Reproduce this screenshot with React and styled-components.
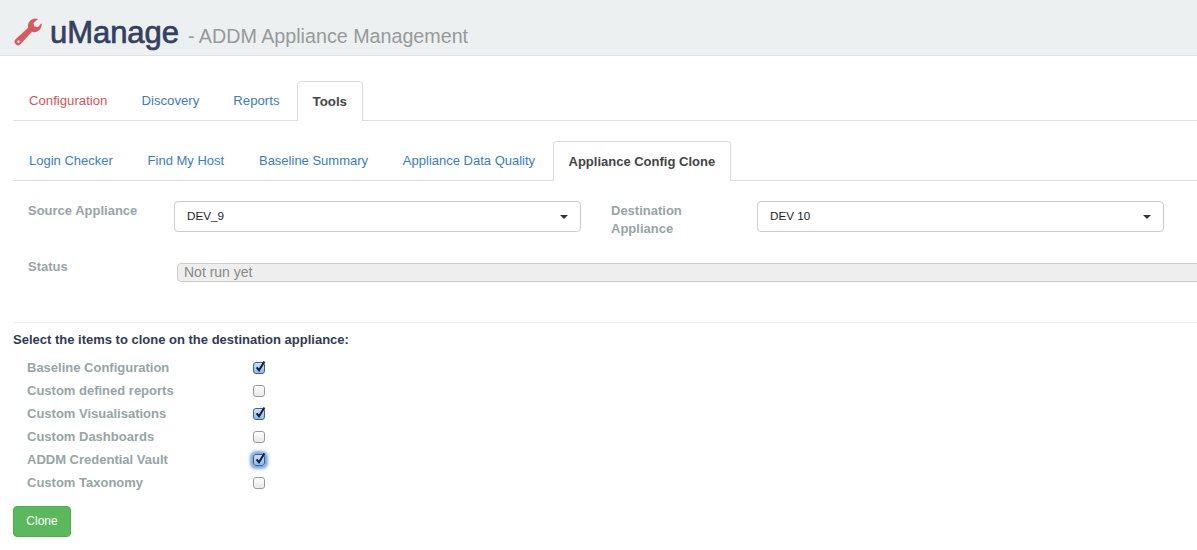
import React from "react";
import styled, { createGlobalStyle } from "styled-components";

const Global = createGlobalStyle`
  html, body { margin: 0; padding: 0; background: #fff; overflow: hidden; }
  body { font-family: "Liberation Sans", Arial, sans-serif; font-size: 13px; color: #333; }
`;
const Page = styled.div`width: 1197px; height: 550px; overflow: hidden;`;
const Header = styled.header`
  height: 56px; box-sizing: border-box; background: #ecf0f1; border-bottom: 1px solid #dde1e2;
  display: flex; align-items: flex-start; padding: 15px 0 0 14px;
`;
const Wrench = styled.svg`width: 29px; height: 32px; margin-right: 7px; flex: none;`;
const Brand = styled.span`font-size: 31px; line-height: 36px; font-weight: 400; color: #34405f; -webkit-text-stroke: 0.7px #34405f; letter-spacing: -0.05px;`;
const Sub = styled.span`font-size: 19.7px; line-height: 24px; color: #969a9b; margin: 9px 0 0 9px;`;
const Main = styled.main`padding: 0 0 0 13px;`;
const Tabs = styled.nav`
  display: flex; border-bottom: 1px solid #ddd; height: 39px;
  margin-top: ${p => p.$top}px;
`;
const Tab = styled.a`
  box-sizing: border-box; height: 40px; line-height: 39px;
  padding: 0 ${p => p.$pad}px 0 ${p => p.$first ? 16 : p.$pad}px;
  font-size: ${p => p.$size}px;
  color: ${p => p.$red ? "#d6535a" : "#3a7cbd"};
`;
const ActiveTab = styled.a`
  box-sizing: border-box; height: 40px; line-height: 39px; padding: 0 15px;
  font-size: ${p => p.$size}px; font-weight: 700; color: #444;
  background: #fff; border: 1px solid #ddd; border-bottom: 0; border-radius: 4px 4px 0 0;
`;
const Form = styled.section`
  display: grid; grid-template-columns: 146px 437px 146px 407px;
  row-gap: 19px; padding: 20px 0 0 15px; width: 1150px; box-sizing: border-box;
`;
const Label = styled.label`
  font-size: 13px; line-height: 18px; font-weight: 700; color: #95a5a6; padding-top: 1px;
  margin-right: ${p => p.$wrap ? 40 : 0}px;
`;
const Select = styled.div`
  height: 31px; box-sizing: border-box; border: 1px solid #ccc; border-radius: 4px; background: #fff;
  display: flex; align-items: center; justify-content: space-between; padding: 0 12px 2px 12px;
  font-size: 11.7px; color: #222; width: 407px;
`;
const Caret = styled.span`width: 0; height: 0; margin-top: 3px; border-left: 4px solid transparent; border-right: 4px solid transparent; border-top: 4px solid #333;`;
const Status = styled.div`
  grid-column: 2 / 5; width: 1100px; height: 19px; box-sizing: border-box; margin: 6px 0 0 3px;
  background: #eee; border: 1px solid #ccc; border-radius: 4px; padding: 0 6px; font-size: 14px; line-height: 17px; color: #888;
  overflow: hidden;
`;
const Rule = styled.hr`border: 0; border-top: 1px solid #eee; margin: 40px 0 0 0;`;
const Heading = styled.h4`margin: 9px 0 0; font-size: 13px; line-height: 15px; font-weight: 700; color: #2f3a55;`;
const List = styled.div`margin-top: 9px; display: flex; flex-direction: column; padding-left: 14px;`;
const Row = styled.div`height: 23px; display: flex; align-items: center;`;
const RowLabel = styled.span`width: 226px; font-size: 13px; font-weight: 700; color: #95a5a6;`;
const Box = styled.span`
  width: 12px; height: 12px; box-sizing: border-box; border-radius: 3px; position: relative; display: block;
  border: 1px solid ${p => p.$on ? "#3f5f8f" : "#9a9a9a"};
  background: ${p => p.$on ? "linear-gradient(#cfe2fb,#8db8ee)" : "linear-gradient(#fff,#e8e8e8)"};
  ${p => p.$focus ? "box-shadow:0 0 3px 3px rgba(70,130,210,.7);" : ""}
`;
const Tick = styled.svg`position: absolute; left: 0; top: -3px; width: 12px; height: 13px;`;
const Clone = styled.button`
  display: block; margin-top: 12px; width: 58px; height: 31px; background: #5cb85c; border: 1px solid #4cae4c; border-radius: 4px;
  color: #fff; font: 400 12px "Liberation Sans", Arial, sans-serif; padding: 0 0 2px;
`;

const items = [
  ["Baseline Configuration", true],
  ["Custom defined reports", false],
  ["Custom Visualisations", true],
  ["Custom Dashboards", false],
  ["ADDM Credential Vault", true, true],
  ["Custom Taxonomy", false],
];

export default function App() {
  return (
    <Page>
      <Global />
      <Header>
        <Wrench viewBox="0 0 30 32">
          <path fill="#d9595c" d="M1.6 24.6 L14.6 12.6 C13.6 8 16.8 3.2 22.2 3 C23.2 3 24.2 3.2 25 3.6 L20.2 7.6 L21 11.2 L24.6 12 L28.6 8 C29.2 13 25.6 17.2 20.8 17.2 C20 17.2 19.2 17.1 18.6 16.9 L6.4 30 C5.2 31.2 3.4 31.2 2.2 30 L1.4 29.2 C0.2 28 0.3 25.8 1.6 24.6 Z" />
          <circle cx="4.6" cy="27.2" r="1.3" fill="#ecf0f1" />
        </Wrench>
        <Brand>uManage</Brand>
        <Sub>- ADDM Appliance Management</Sub>
      </Header>
      <Main>
        <Tabs $top={25}>
          <Tab $red $first $pad={17} $size={13.2}>Configuration</Tab>
          <Tab $pad={17} $size={13.2}>Discovery</Tab>
          <Tab $pad={17} $size={13.2}>Reports</Tab>
          <ActiveTab $size={13.3}>Tools</ActiveTab>
        </Tabs>
        <Tabs $top={20}>
          <Tab $first $pad={17.4} $size={13}>Login Checker</Tab>
          <Tab $pad={17.4} $size={13}>Find My Host</Tab>
          <Tab $pad={17.4} $size={13}>Baseline Summary</Tab>
          <Tab $pad={17.4} $size={13}>Appliance Data Quality</Tab>
          <ActiveTab $size={13}>Appliance Config Clone</ActiveTab>
        </Tabs>
        <Form>
          <Label>Source Appliance</Label>
          <Select>DEV_9<Caret /></Select>
          <Label $wrap>Destination Appliance</Label>
          <Select>DEV 10<Caret /></Select>
          <Label>Status</Label>
          <Status>Not run yet</Status>
        </Form>
        <Rule />
        <Heading>Select the items to clone on the destination appliance:</Heading>
        <List>
          {items.map(([name, on, focus]) => (
            <Row key={name}>
              <RowLabel>{name}</RowLabel>
              <Box $on={on} $focus={focus}>
                {on && (
                  <Tick viewBox="0 0 12 13">
                    <path d="M2.6 7.4 L5 10.2 L10.4 1.4" fill="none" stroke="#12203a" strokeWidth="2" />
                  </Tick>
                )}
              </Box>
            </Row>
          ))}
        </List>
        <Clone>Clone</Clone>
      </Main>
    </Page>
  );
}
